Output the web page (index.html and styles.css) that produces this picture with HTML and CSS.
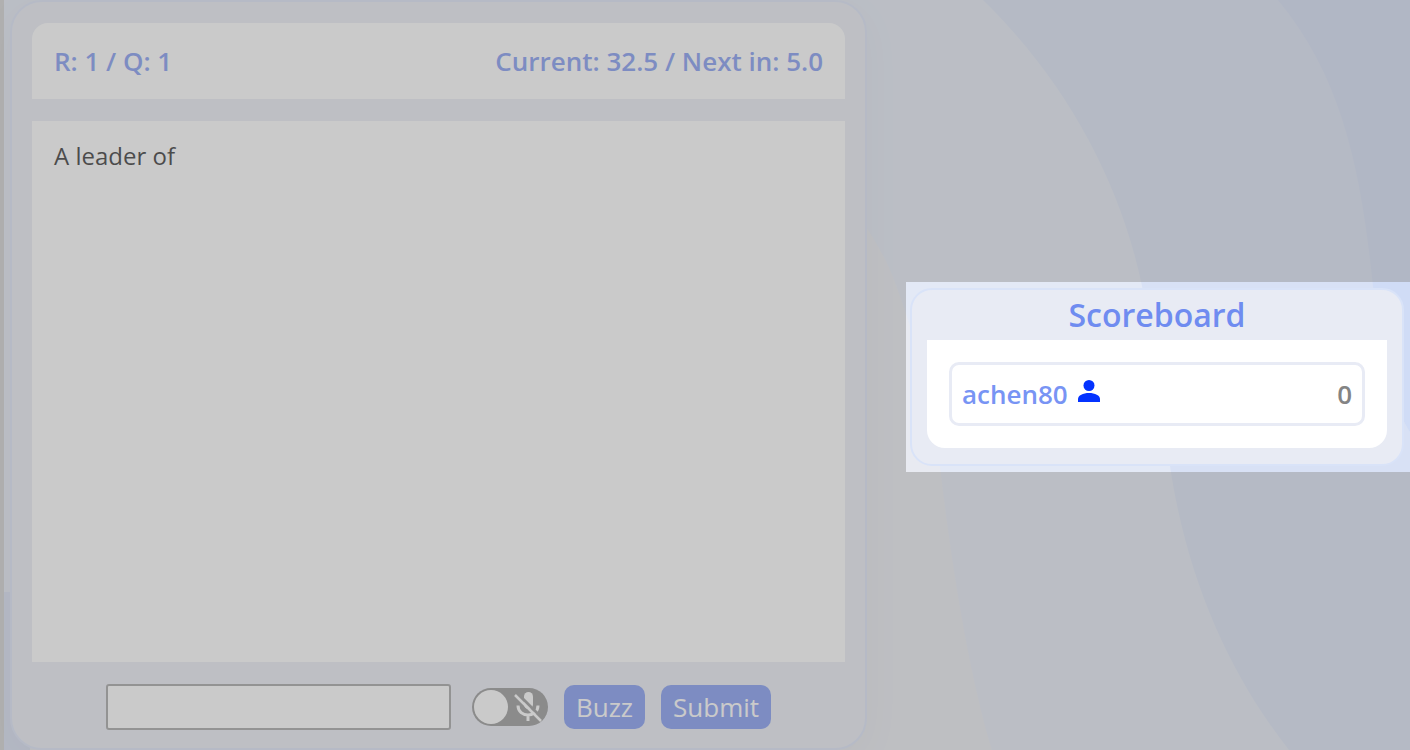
FILE: index.html
```html
<!DOCTYPE html>
<html lang="en">
<head>
<meta charset="utf-8">
<title>Quiz room</title>
<link rel="stylesheet" href="styles.css">
</head>
<body>
<svg class="backdrop" viewBox="0 0 1410 750" preserveAspectRatio="none" aria-hidden="true">
  <rect width="1410" height="750" fill="#e3e9f6"/>
  <path fill="#e8eaf1" d="M20 140H780C840 180 880 240 896 285C925 365 933 410 940 466C951 560 968 670 992 750H20Z"/>
  <path fill="#d8e1f5" d="M983 0C1065 80 1120 180 1142 286C1154 346 1158 406 1170 466C1187 580 1230 675 1289 750H1410V0Z"/>
  <path fill="#d0dcf6" d="M1278 0C1345 80 1362 180 1373 286C1377 340 1390 400 1410 432V0Z"/>
  <path fill="#d6def4" d="M0 592H30V750H0Z"/>
</svg>
<div class="app">
  <main class="game">
    <header class="status">
      <span>R: 1 / Q: 1</span>
      <span>Current: 32.5 / Next in: 5.0</span>
    </header>
    <section class="question">A leader of</section>
    <form class="controls">
      <input class="answer" type="text" aria-label="Answer">
      <label class="mic">
        <input class="mic-input" type="checkbox" aria-label="Microphone">
        <span class="mic-knob"></span>
        <svg class="mic-icon" viewBox="0 0 28 32" aria-hidden="true">
          <rect x="10" y="1" width="9" height="17" rx="4.500" fill="#fff"/>
          <path d="M4 14.500C4 27 24 27 24 14.500M14 24V30" fill="none" stroke="#fff" stroke-width="3"/>
          <path d="M3 2L29 28" stroke="#898989" stroke-width="3"/>
          <path d="M1 4L27 30" stroke="#fff" stroke-width="2.500"/>
        </svg>
      </label>
      <div class="actions">
        <button class="button" type="button">Buzz</button>
        <button class="button" type="submit">Submit</button>
      </div>
    </form>
  </main>
  <aside class="side">
    <div class="spotlight">
      <section class="scoreboard">
        <h2 class="title">Scoreboard</h2>
        <div class="scores">
          <div class="player">
            <span class="name">achen80</span>
            <svg class="person" viewBox="0 0 22 22" aria-hidden="true"><circle cx="11" cy="5.500" r="5.500"/><path d="M0 22V19C0 15.500 5 13 11 13S22 15.500 22 19V22Z"/></svg>
            <span class="points">0</span>
          </div>
        </div>
      </section>
    </div>
  </aside>
</div>
</body>
</html>
```
FILE: styles.css
```css
* { box-sizing: border-box; }
body {
  margin: 0;
  overflow: hidden;
  font-family: "Open Sans", "Noto Sans", sans-serif;
  color: #111;
}
.backdrop {
  position: absolute;
  inset: 0;
  width: 100%;
  height: 100%;
  z-index: -1;
}
.app {
  display: grid;
  grid-template-columns: minmax(0, 857fr) minmax(0, 543fr);
  min-height: 100vh;
  padding-left: 6px;
  border-left: 4px solid #cecece;
}
.game {
  display: flex;
  flex-direction: column;
  gap: 22px;
  padding: 21px 20px 18px;
  border: 2px solid #d9e2f8;
  border-radius: 32px;
  background: #e8ebf4;
  box-shadow: 0 10px 40px rgba(0, 0, 0, 0.04);
}
.status {
  display: flex;
  justify-content: space-between;
  align-items: center;
  min-height: 76px;
  padding: 0 22px;
  border-radius: 16px 16px 0 0;
  background: #fff;
  color: #6f8cf0;
  font-size: 26px;
  font-weight: 600;
}
.question {
  flex: 1;
  padding: 19px 22px;
  background: #fff;
  font-size: 24px;
  line-height: 32px;
}
.controls {
  display: flex;
  justify-content: center;
  align-items: center;
  gap: 21px;
}
.answer {
  width: 345px;
  height: 46px;
  padding: 0 8px;
  border: 2px solid #999;
  border-radius: 3px;
  background: #fff;
  font: inherit;
  font-size: 24px;
}
.mic {
  position: relative;
  display: flex;
  align-items: center;
  justify-content: space-between;
  width: 76px;
  height: 38px;
  margin-right: -5px;
  padding: 0 6px 0 2px;
  border-radius: 19px;
  background: #898989;
}
.mic-input {
  position: absolute;
  inset: 0;
  width: 100%;
  height: 100%;
  margin: 0;
  opacity: 0;
}
.mic-knob {
  width: 34px;
  height: 34px;
  border-radius: 50%;
  background: #fff;
}
.mic-icon {
  width: 28px;
  height: 32px;
}
.actions {
  display: flex;
  gap: 16px;
}
.button {
  height: 44px;
  padding: 0 12px;
  border: 0;
  border-radius: 10px;
  background: #6f8cf0;
  color: #fff;
  font-family: inherit;
  font-size: 26px;
}
.side {
  display: flex;
  align-items: center;
  padding: 4px 0 0 39px;
}
.spotlight {
  position: relative;
  flex: 1;
  padding: 6px 6px 6px 4px;
  box-shadow: 0 0 0 9999px rgba(141, 141, 141, 0.465);
}
.scoreboard {
  padding: 0 15px 16px;
  border: 2px solid #d9e3f8;
  border-radius: 22px;
  background: #e8ebf4;
}
.title {
  margin: 0;
  color: #6f8cf0;
  font-size: 32px;
  font-weight: 600;
  line-height: 50px;
  text-align: center;
}
.scores {
  padding: 22px;
  border-radius: 0 0 18px 18px;
  background: #fff;
}
.player {
  display: flex;
  align-items: center;
  gap: 10px;
  height: 64px;
  padding: 0 10px;
  border: 3px solid #e8ebf5;
  border-radius: 10px;
  font-size: 26px;
  font-weight: 600;
}
.name { color: #7894f4; }
.person {
  width: 22px;
  height: 22px;
  margin-bottom: 6px;
  fill: #0433ff;
}
.points {
  margin-left: auto;
  color: #848484;
}
```
